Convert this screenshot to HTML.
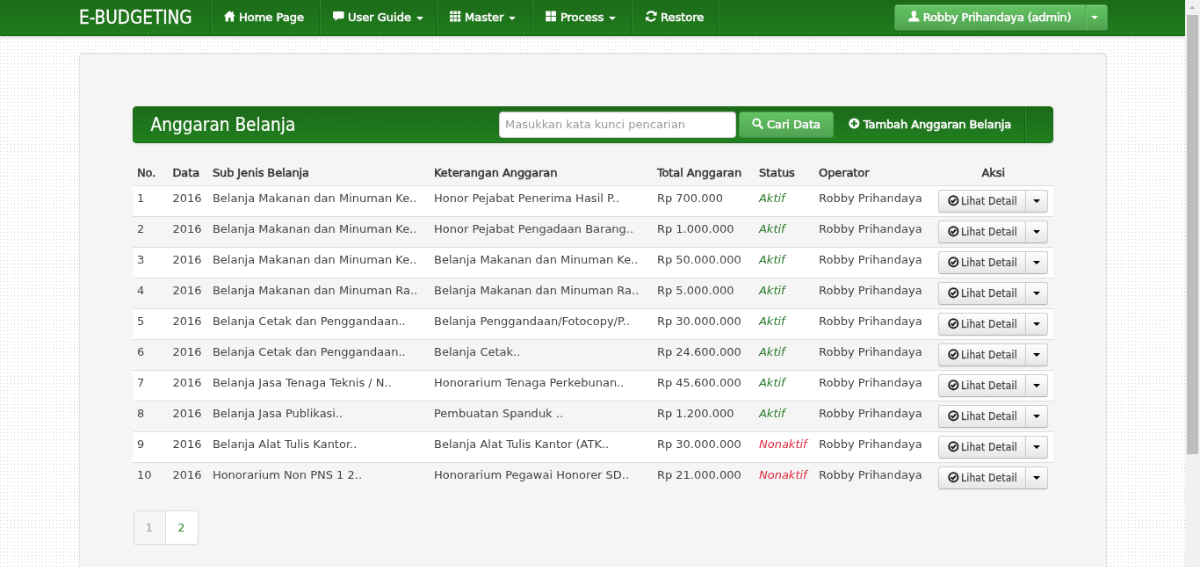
<!DOCTYPE html>
<html lang="id">
<head>
<meta charset="utf-8">
<title>E-BUDGETING</title>
<style>
*{box-sizing:content-box}
html,body{margin:0;padding:0;width:1200px;height:567px;overflow:hidden;background:#fff}
body{font-family:"DejaVu Sans","Liberation Sans",sans-serif;font-size:13px;line-height:20px;color:#444}
#stage{position:absolute;left:0;top:0;width:1366px;height:646px;transform:scale(0.8785);transform-origin:0 0;overflow:hidden;will-change:transform;
 background-color:#fff;background-image:radial-gradient(circle at 0.5px 0.5px,#d4d4d4 0.6px,rgba(255,255,255,0) 0.9px);background-size:4px 4px}
.b{font-family:"DejaVu Sans","Liberation Sans",sans-serif;font-weight:normal;-webkit-text-stroke:0.6px currentColor}
svg.ic{display:inline-block;vertical-align:-2.3px;margin-right:-1.2px}
/* top navbar */
#nav{position:absolute;left:0;top:0;width:1349px;height:40px;border-bottom:1px solid #17601a;
 background:linear-gradient(to bottom,#1c6b18 0%,#207d1d 100%);box-shadow:0 1px 3px rgba(0,0,0,.25)}
#nav .brand{position:absolute;left:90px;top:0;line-height:40px;font-family:"DejaVu Sans Condensed","Liberation Sans",sans-serif;font-size:20.5px;color:#fff;-webkit-text-stroke:0.3px #fff;text-shadow:0 1px 0 rgba(0,0,0,.2)}
#nav .it{position:absolute;top:0;height:40px;line-height:40px;color:#fff;font-size:13px;white-space:nowrap;text-shadow:0 -1px 0 rgba(0,0,0,.25)}
#nav .dv{position:absolute;top:0;width:1px;height:40px;background:#176016;border-right:1px solid #2c8a2a}
.caret{display:inline-block;width:0;height:0;vertical-align:middle;border-left:4px solid transparent;border-right:4px solid transparent;border-top:4px solid #fff;margin-left:1.5px;position:relative;top:0}
#user{position:absolute;left:1018px;top:5px;height:28px;width:241px;border-radius:4px;border:1px solid #4aa04a;border-bottom-color:#3d8f3d;
 background:linear-gradient(to bottom,#62c462 0%,#51a351 100%);box-shadow:inset 0 1px 0 rgba(255,255,255,.2),0 1px 2px rgba(0,0,0,.1);color:#fff;line-height:28px;text-shadow:0 -1px 0 rgba(0,0,0,.25)}
#user .sp{position:absolute;left:216px;top:0;width:1px;height:28px;background:#4fa552;border-right:1px solid #68c068}
/* well */
#well{position:absolute;left:89.5px;top:60px;width:1168px;height:640px;background:#f5f5f5;border:1px solid #e3e3e3;border-radius:4px;box-shadow:inset 0 1px 1px rgba(0,0,0,.05)}
#bar{position:absolute;left:151px;top:120.5px;width:1046px;height:40px;border:1px solid #196a17;border-radius:4px;
 background:linear-gradient(to bottom,#1c6a19 0%,#21801f 100%);box-shadow:0 1px 4px rgba(0,0,0,.065)}
#bar .ttl{position:absolute;left:19.5px;top:0;line-height:40px;font-family:"DejaVu Sans Condensed","Liberation Sans",sans-serif;font-size:20.6px;color:#fff;-webkit-text-stroke:0.2px #fff}
#bar .inp{position:absolute;left:416px;top:5px;width:256px;height:20px;padding:4px 6px;border:1px solid #ccc;border-radius:4px;background:#fff;color:#999;line-height:20px;font-size:13px;white-space:nowrap;box-shadow:inset 0 1px 1px rgba(0,0,0,.075)}
#bar .go{position:absolute;left:689px;top:5px;width:106px;height:28px;border:1px solid #4aa04a;border-bottom-color:#3d8f3d;border-radius:4px;background:linear-gradient(to bottom,#62c462,#51a351);color:#fff;line-height:28px;text-align:center;text-shadow:0 -1px 0 rgba(0,0,0,.25)}
#bar .add{position:absolute;left:814px;top:0;line-height:40px;color:#fff;white-space:nowrap;letter-spacing:-0.1px;text-shadow:0 -1px 0 rgba(0,0,0,.25)}
#bar .dv{position:absolute;left:1014px;top:0;width:1px;height:40px;background:#176016;border-right:1px solid #2c8a2a}
/* table */
#tb{position:absolute;left:151px;top:182.5px;width:1048px;border-collapse:collapse;table-layout:fixed}
#tb th,#tb td{padding:4px 5px;line-height:20px;text-align:left;vertical-align:top;white-space:nowrap;overflow:visible}
#tb th{height:20px;font-family:"DejaVu Sans","Liberation Sans",sans-serif;font-weight:normal;-webkit-text-stroke:0.5px currentColor;color:#333;letter-spacing:-0.1px}
#tb td{border-top:1px solid #ddd;height:26px}
#tb tr.o td{background:#fff}
#tb td.t{padding-top:6px;padding-bottom:2px;height:26px}
.ak{color:#2a7a2a;font-style:italic}
.na{color:#e0293a;font-style:italic}
.bg{position:relative;display:block;height:26px;width:124px;font-size:11.9px;margin-left:0.9px}
.bg .m{font-family:"DejaVu Sans Condensed","Liberation Sans",sans-serif;-webkit-text-stroke:0.25px currentColor;letter-spacing:0.2px;position:absolute;left:0;top:0;width:97.8px;height:24px;line-height:24px;border:1px solid #ccc;border-bottom-color:#b3b3b3;border-radius:3px 0 0 3px;background:linear-gradient(to bottom,#fff,#e6e6e6);color:#444;text-align:center;text-shadow:0 1px 1px rgba(255,255,255,.75);box-shadow:inset 0 1px 0 rgba(255,255,255,.2),0 1px 2px rgba(0,0,0,.05)}
.bg .c{position:absolute;left:98.8px;top:0;width:24px;height:24px;border:1px solid #ccc;border-bottom-color:#b3b3b3;border-radius:0 3px 3px 0;background:linear-gradient(to bottom,#fff,#e6e6e6);box-shadow:inset 0 1px 0 rgba(255,255,255,.2),0 1px 2px rgba(0,0,0,.05)}
.bg .m svg.ic{margin-right:-2.2px;vertical-align:-2px}
.bg .c i{position:absolute;left:8px;top:10px;width:0;height:0;border-left:4px solid transparent;border-right:4px solid transparent;border-top:4px solid #000}
/* pagination */
#pg{position:absolute;left:151.5px;top:580.5px;height:37px;border:1px solid #ddd;border-radius:3px;box-shadow:0 1px 2px rgba(0,0,0,.05);overflow:hidden}
#pg span{float:left;height:37px;line-height:37px;text-align:center}
#pg .p1{width:35px;background:#f5f5f5;color:#999;border-right:1px solid #ddd}
#pg .p2{width:36px;background:#fff;color:#2f8a2f}
/* scrollbar */
#sb{position:absolute;left:1349px;top:0;width:17px;height:646px;background:#f1f1f1}
#sb .th{position:absolute;left:2px;top:17px;width:13px;height:500px;background:#bdbdbd}
#sb .up{position:absolute;left:5px;top:6.5px;width:0;height:0;border-left:3.5px solid transparent;border-right:3.5px solid transparent;border-bottom:3.5px solid #a8a8a8}
</style>
</head>
<body>
<div id="stage">
 <div id="well"></div>
 <div id="nav">
  <span class="brand">E-BUDGETING</span>
  <div class="dv" style="left:239px"></div>
  <span class="it b" style="left:255px"><svg class="ic" width="14" height="14" viewBox="0 0 14 14"><path fill="#fff" d="M6.3 0.2 L0 6 V6.6 H1.6 V12.4 H5 V8.2 H7.6 V12.4 H11 V6.6 H12.6 V6 L10.6 4.1 V1.2 H8.8 V2.5 Z"/></svg> Home Page</span>
  <div class="dv" style="left:363px"></div>
  <span class="it b" style="left:379px"><svg class="ic" width="14" height="14" viewBox="0 0 14 14"><path fill="#fff" d="M1.4 1 H11.2 Q12.6 1 12.6 2.4 V7.8 Q12.6 9.2 11.2 9.2 H5.6 L2.6 12 V9.2 H1.4 Q0 9.2 0 7.8 V2.4 Q0 1 1.4 1 Z"/></svg> User Guide <i class="caret"></i></span>
  <div class="dv" style="left:496px"></div>
  <span class="it b" style="left:512px"><svg class="ic" width="14" height="14" viewBox="0 0 14 14"><g fill="#fff"><rect x="0.2" y="0.6" width="3.4" height="3.4"/><rect x="4.5" y="0.6" width="3.4" height="3.4"/><rect x="8.8" y="0.6" width="3.4" height="3.4"/><rect x="0.2" y="4.9" width="3.4" height="3.4"/><rect x="4.5" y="4.9" width="3.4" height="3.4"/><rect x="8.8" y="4.9" width="3.4" height="3.4"/><rect x="0.2" y="9.2" width="3.4" height="3.4"/><rect x="4.5" y="9.2" width="3.4" height="3.4"/><rect x="8.8" y="9.2" width="3.4" height="3.4"/></g></svg> Master <i class="caret"></i></span>
  <div class="dv" style="left:605px"></div>
  <span class="it b" style="left:621px"><svg class="ic" width="14" height="14" viewBox="0 0 14 14"><g fill="#fff"><rect x="0.2" y="0.6" width="5.4" height="5.4"/><rect x="6.5" y="0.6" width="5.4" height="5.4"/><rect x="0.2" y="6.9" width="5.4" height="5.4"/><rect x="6.5" y="6.9" width="5.4" height="5.4"/></g></svg> Process <i class="caret"></i></span>
  <div class="dv" style="left:718px"></div>
  <span class="it b" style="left:735px"><svg class="ic" width="14" height="14" viewBox="0 0 14 14"><path fill="none" stroke="#fff" stroke-width="2.1" d="M11.1 4.6 A5.2 5.2 0 0 0 1.6 4.4 M1.3 8.4 A5.2 5.2 0 0 0 10.8 8.6"/><path fill="#fff" d="M12.6 0.9 V5.8 H7.7 Z M-0.2 12.1 V7.2 H4.7 Z"/></svg> Restore</span>
  <div class="dv" style="left:816px"></div>
  <div id="user" class="b"><span style="position:absolute;left:15px;top:0;white-space:nowrap;letter-spacing:-0.17px"><svg class="ic" width="14" height="14" viewBox="0 0 14 14"><path fill="#fff" d="M6.3 0.3 C8.4 0.3 9.1 1.9 9.1 3.6 C9.1 5.2 8.3 6.3 7.8 6.9 V7.8 C9.6 8.5 12.4 9.2 12.4 10.9 V12.4 H0.2 V10.9 C0.2 9.2 3 8.5 4.8 7.8 V6.9 C4.3 6.3 3.5 5.2 3.5 3.6 C3.5 1.9 4.2 0.3 6.3 0.3 Z"/></svg> Robby Prihandaya (admin)</span><div class="sp"></div><i class="caret" style="position:absolute;left:221px;top:12px"></i></div>
 </div>
 <div id="bar">
  <span class="ttl">Anggaran Belanja</span>
  <div class="inp">Masukkan kata kunci pencarian</div>
  <div class="go b"><svg class="ic" width="14" height="14" viewBox="0 0 14 14"><circle cx="5.2" cy="5.4" r="3.9" fill="none" stroke="#fff" stroke-width="2"/><path d="M8.2 8.4 L11.8 12" stroke="#fff" stroke-width="2.4" stroke-linecap="round"/></svg> Cari Data</div>
  <span class="add b"><svg class="ic" width="14" height="14" viewBox="0 0 14 14"><circle cx="6.3" cy="6.5" r="6.1" fill="#fff"/><path d="M6.3 2.9 V10.1 M2.7 6.5 H9.9" stroke="#1f7a1c" stroke-width="2.2"/></svg> Tambah Anggaran Belanja</span>
  <div class="dv"></div>
 </div>
 <table id="tb">
  <colgroup><col style="width:40.4px"><col style="width:45.5px"><col style="width:252.1px"><col style="width:253.9px"><col style="width:116.1px"><col style="width:68.1px"><col style="width:135.4px"><col style="width:136.5px"></colgroup>
  <thead><tr><th>No.</th><th>Data</th><th>Sub Jenis Belanja</th><th>Keterangan Anggaran</th><th>Total Anggaran</th><th>Status</th><th>Operator</th><th style="text-align:center">Aksi</th></tr></thead>
  <tbody>
   <tr class="o"><td>1</td><td>2016</td><td>Belanja Makanan dan Minuman Ke..</td><td>Honor Pejabat Penerima Hasil P..</td><td>Rp 700.000</td><td><span class="ak">Aktif</span></td><td>Robby Prihandaya</td><td><div class="bg"><div class="m"><svg class="ic" width="14" height="14" viewBox="0 0 14 14"><circle cx="6.3" cy="7.3" r="5.1" fill="none" stroke="#222" stroke-width="2"/><path d="M3.6 7.3 L5.6 9.2 L9 5.4" fill="none" stroke="#222" stroke-width="2.1"/></svg> Lihat Detail</div><div class="c"><i></i></div></div></td></tr>
   <tr><td>2</td><td>2016</td><td>Belanja Makanan dan Minuman Ke..</td><td>Honor Pejabat Pengadaan Barang..</td><td>Rp 1.000.000</td><td><span class="ak">Aktif</span></td><td>Robby Prihandaya</td><td><div class="bg"><div class="m"><svg class="ic" width="14" height="14" viewBox="0 0 14 14"><circle cx="6.3" cy="7.3" r="5.1" fill="none" stroke="#222" stroke-width="2"/><path d="M3.6 7.3 L5.6 9.2 L9 5.4" fill="none" stroke="#222" stroke-width="2.1"/></svg> Lihat Detail</div><div class="c"><i></i></div></div></td></tr>
   <tr class="o"><td>3</td><td>2016</td><td>Belanja Makanan dan Minuman Ke..</td><td>Belanja Makanan dan Minuman Ke..</td><td>Rp 50.000.000</td><td><span class="ak">Aktif</span></td><td>Robby Prihandaya</td><td><div class="bg"><div class="m"><svg class="ic" width="14" height="14" viewBox="0 0 14 14"><circle cx="6.3" cy="7.3" r="5.1" fill="none" stroke="#222" stroke-width="2"/><path d="M3.6 7.3 L5.6 9.2 L9 5.4" fill="none" stroke="#222" stroke-width="2.1"/></svg> Lihat Detail</div><div class="c"><i></i></div></div></td></tr>
   <tr><td>4</td><td>2016</td><td>Belanja Makanan dan Minuman Ra..</td><td>Belanja Makanan dan Minuman Ra..</td><td>Rp 5.000.000</td><td><span class="ak">Aktif</span></td><td>Robby Prihandaya</td><td><div class="bg"><div class="m"><svg class="ic" width="14" height="14" viewBox="0 0 14 14"><circle cx="6.3" cy="7.3" r="5.1" fill="none" stroke="#222" stroke-width="2"/><path d="M3.6 7.3 L5.6 9.2 L9 5.4" fill="none" stroke="#222" stroke-width="2.1"/></svg> Lihat Detail</div><div class="c"><i></i></div></div></td></tr>
   <tr class="o"><td>5</td><td>2016</td><td>Belanja Cetak dan Penggandaan..</td><td>Belanja Penggandaan/Fotocopy/P..</td><td>Rp 30.000.000</td><td><span class="ak">Aktif</span></td><td>Robby Prihandaya</td><td><div class="bg"><div class="m"><svg class="ic" width="14" height="14" viewBox="0 0 14 14"><circle cx="6.3" cy="7.3" r="5.1" fill="none" stroke="#222" stroke-width="2"/><path d="M3.6 7.3 L5.6 9.2 L9 5.4" fill="none" stroke="#222" stroke-width="2.1"/></svg> Lihat Detail</div><div class="c"><i></i></div></div></td></tr>
   <tr><td>6</td><td>2016</td><td>Belanja Cetak dan Penggandaan..</td><td>Belanja Cetak..</td><td>Rp 24.600.000</td><td><span class="ak">Aktif</span></td><td>Robby Prihandaya</td><td><div class="bg"><div class="m"><svg class="ic" width="14" height="14" viewBox="0 0 14 14"><circle cx="6.3" cy="7.3" r="5.1" fill="none" stroke="#222" stroke-width="2"/><path d="M3.6 7.3 L5.6 9.2 L9 5.4" fill="none" stroke="#222" stroke-width="2.1"/></svg> Lihat Detail</div><div class="c"><i></i></div></div></td></tr>
   <tr class="o"><td>7</td><td>2016</td><td>Belanja Jasa Tenaga Teknis / N..</td><td>Honorarium Tenaga Perkebunan..</td><td>Rp 45.600.000</td><td><span class="ak">Aktif</span></td><td>Robby Prihandaya</td><td><div class="bg"><div class="m"><svg class="ic" width="14" height="14" viewBox="0 0 14 14"><circle cx="6.3" cy="7.3" r="5.1" fill="none" stroke="#222" stroke-width="2"/><path d="M3.6 7.3 L5.6 9.2 L9 5.4" fill="none" stroke="#222" stroke-width="2.1"/></svg> Lihat Detail</div><div class="c"><i></i></div></div></td></tr>
   <tr><td>8</td><td>2016</td><td>Belanja Jasa Publikasi..</td><td>Pembuatan Spanduk ..</td><td>Rp 1.200.000</td><td><span class="ak">Aktif</span></td><td>Robby Prihandaya</td><td><div class="bg"><div class="m"><svg class="ic" width="14" height="14" viewBox="0 0 14 14"><circle cx="6.3" cy="7.3" r="5.1" fill="none" stroke="#222" stroke-width="2"/><path d="M3.6 7.3 L5.6 9.2 L9 5.4" fill="none" stroke="#222" stroke-width="2.1"/></svg> Lihat Detail</div><div class="c"><i></i></div></div></td></tr>
   <tr class="o"><td>9</td><td>2016</td><td>Belanja Alat Tulis Kantor..</td><td>Belanja Alat Tulis Kantor (ATK..</td><td>Rp 30.000.000</td><td><span class="na">Nonaktif</span></td><td>Robby Prihandaya</td><td><div class="bg"><div class="m"><svg class="ic" width="14" height="14" viewBox="0 0 14 14"><circle cx="6.3" cy="7.3" r="5.1" fill="none" stroke="#222" stroke-width="2"/><path d="M3.6 7.3 L5.6 9.2 L9 5.4" fill="none" stroke="#222" stroke-width="2.1"/></svg> Lihat Detail</div><div class="c"><i></i></div></div></td></tr>
   <tr><td>10</td><td>2016</td><td>Honorarium Non PNS 1 2..</td><td>Honorarium Pegawai Honorer SD..</td><td>Rp 21.000.000</td><td><span class="na">Nonaktif</span></td><td>Robby Prihandaya</td><td><div class="bg"><div class="m"><svg class="ic" width="14" height="14" viewBox="0 0 14 14"><circle cx="6.3" cy="7.3" r="5.1" fill="none" stroke="#222" stroke-width="2"/><path d="M3.6 7.3 L5.6 9.2 L9 5.4" fill="none" stroke="#222" stroke-width="2.1"/></svg> Lihat Detail</div><div class="c"><i></i></div></div></td></tr>
  </tbody>
 </table>
 <div id="pg"><span class="p1">1</span><span class="p2">2</span></div>
 <div id="sb"><div class="up"></div><div class="th"></div></div>
</div>
</body>
</html>
